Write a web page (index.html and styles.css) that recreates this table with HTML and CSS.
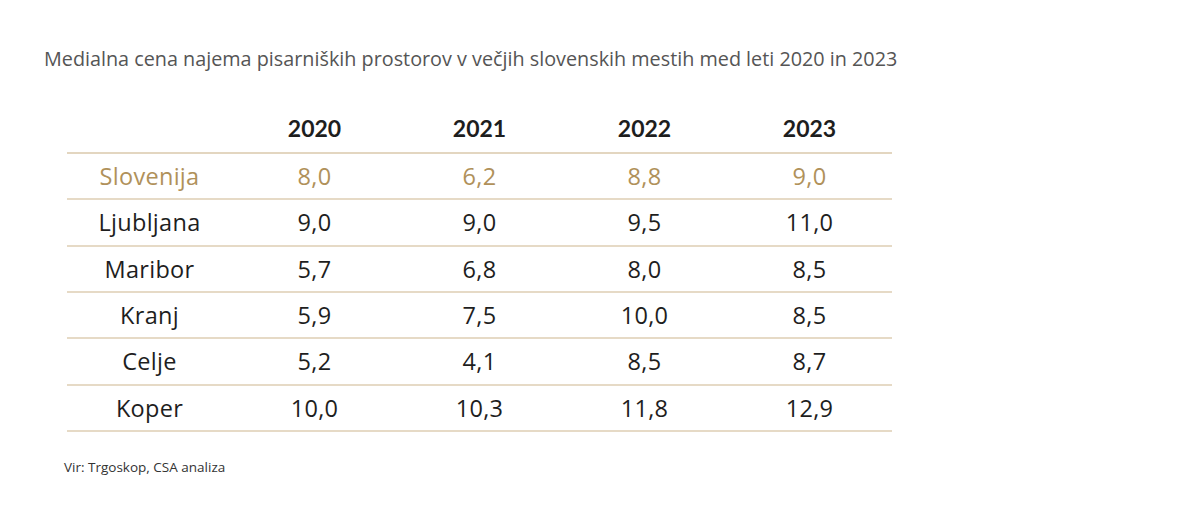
FILE: index.html
```html
<!DOCTYPE html>
<html lang="sl">
<head>
<meta charset="utf-8">
<link rel="stylesheet" href="styles.css">
</head>
<body>
<main class="page">
  <h1 class="title">Medialna cena najema pisarniških prostorov v večjih slovenskih mestih med leti 2020 in 2023</h1>
  <table class="data">
    <thead>
      <tr><th></th><th>2020</th><th>2021</th><th>2022</th><th>2023</th></tr>
    </thead>
    <tbody>
      <tr class="highlight"><td>Slovenija</td><td>8,0</td><td>6,2</td><td>8,8</td><td>9,0</td></tr>
      <tr><td>Ljubljana</td><td>9,0</td><td>9,0</td><td>9,5</td><td>11,0</td></tr>
      <tr><td>Maribor</td><td>5,7</td><td>6,8</td><td>8,0</td><td>8,5</td></tr>
      <tr><td>Kranj</td><td>5,9</td><td>7,5</td><td>10,0</td><td>8,5</td></tr>
      <tr><td>Celje</td><td>5,2</td><td>4,1</td><td>8,5</td><td>8,7</td></tr>
      <tr><td>Koper</td><td>10,0</td><td>10,3</td><td>11,8</td><td>12,9</td></tr>
    </tbody>
  </table>
  <p class="source">Vir: Trgoskop, CSA analiza</p>
</main>
</body>
</html>
```

FILE: styles.css
```css
html, body {
  margin: 0;
  padding: 0;
  background: #ffffff;
}
.page {
  width: 1200px;
  height: 517px;
  box-sizing: border-box;
  padding: 45px 0 0 44px;
  font-family: "Open Sans", "Liberation Sans", sans-serif;
}
.title {
  margin: 0;
  font-size: 19.8px;
  font-weight: 400;
  color: #555555;
  line-height: 28px;
}
.data {
  margin: 30px 0 0 23px;
  border-collapse: collapse;
  width: 825px;
  table-layout: fixed;
}
.data th, .data td {
  width: 165px;
  text-align: center;
  padding: 0;
}
.data th {
  font-family: "Lato", "Liberation Sans", sans-serif;
  font-weight: 700;
  font-size: 23px;
  color: #1e1e1e;
  height: 49px;
  vertical-align: middle;
  border-bottom: 2px solid #e3d6c0;
}
.data td {
  font-family: "Open Sans", "Liberation Sans", sans-serif;
  font-size: 23.5px;
  color: #1e1e1e;
  height: 44.33px;
  border-bottom: 2px solid #e6dac6;
  letter-spacing: 0.3px;
}
.data .highlight td {
  color: #b0915a;
}
.source {
  margin: 26px 0 0 20px;
  font-size: 13.5px;
  color: #333333;
}
```
